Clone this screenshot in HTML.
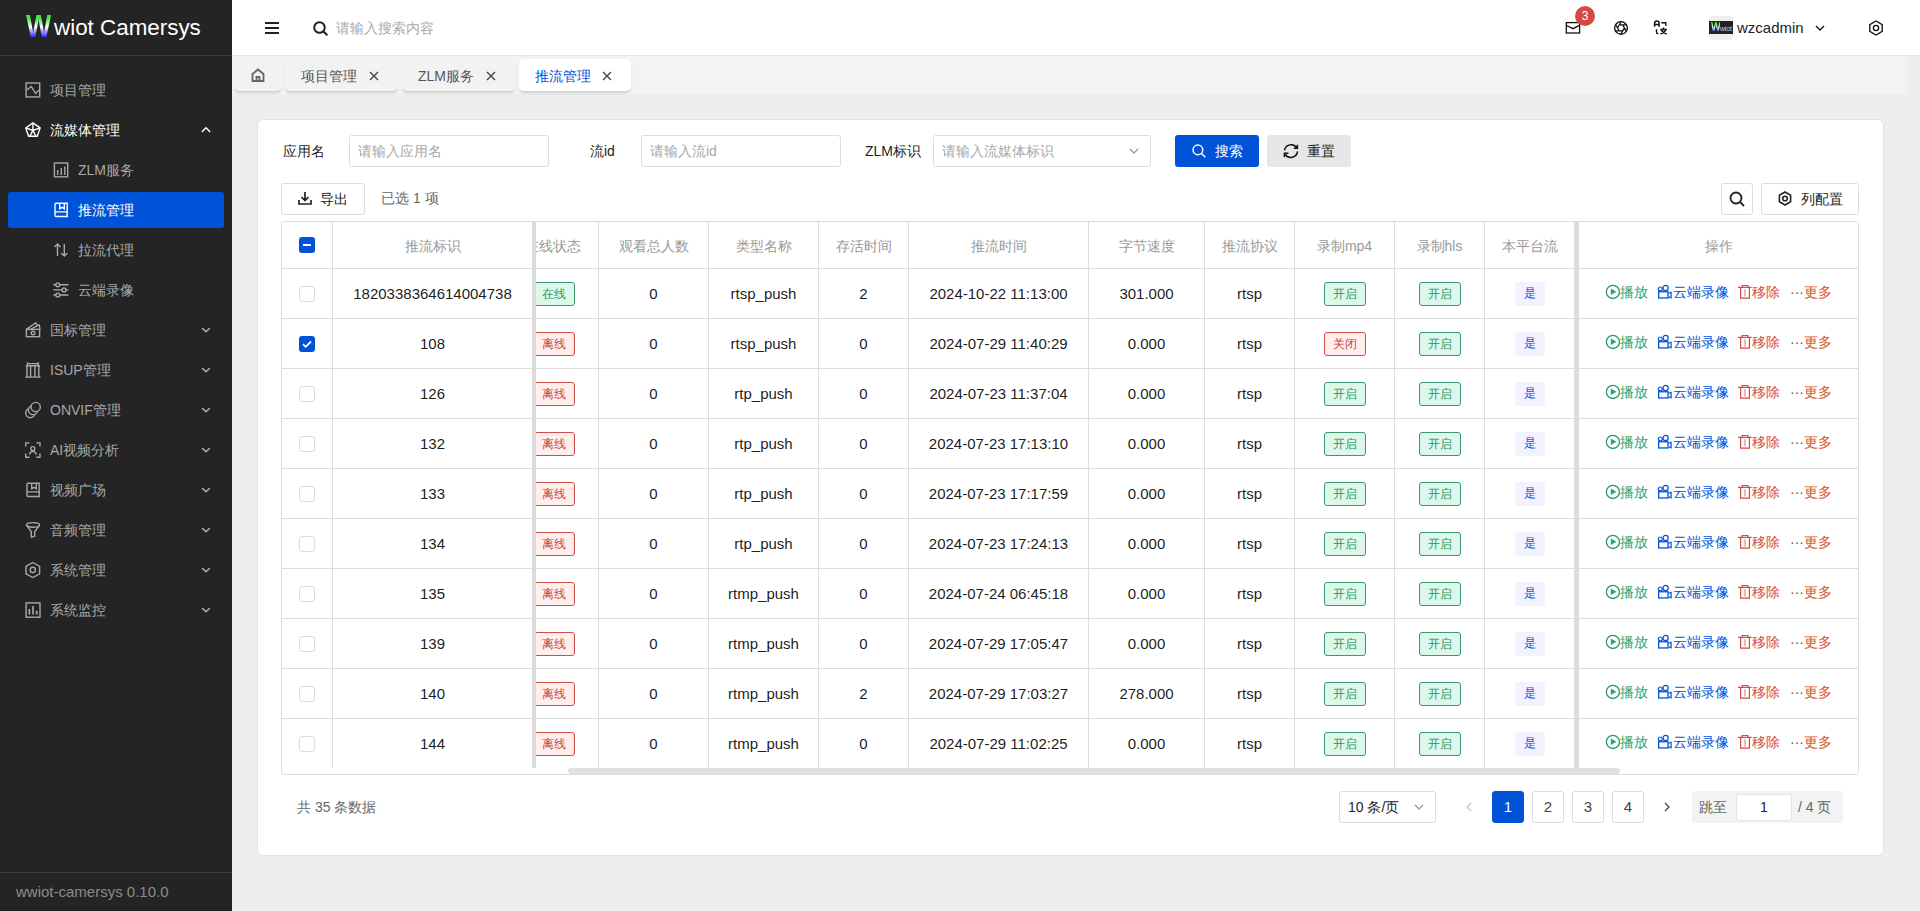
<!DOCTYPE html><html><head><meta charset="utf-8"><style>*{box-sizing:border-box;margin:0;padding:0}
html,body{width:1920px;height:911px;overflow:hidden}
body{background:#eeeeee;font-family:"Liberation Sans",sans-serif;font-size:14px;color:rgba(0,0,0,.9);position:relative}
.abs{position:absolute}
svg{display:block}
/* sidebar */
#side{position:absolute;left:0;top:0;width:232px;height:911px;background:#242424}
#logo{position:absolute;left:0;top:0;width:232px;height:56px;border-bottom:1px solid #3a3a3a}
.mi{position:absolute;left:0;width:232px;height:40px;color:#a8a8a8;font-size:14px;line-height:40px}
.mi .ic{position:absolute;top:12px;width:16px;height:16px}
.mi .tx{position:absolute;left:50px;top:0}
.mi.l2 .tx{left:78px}
.mi .ch{position:absolute;left:199px;top:14px;width:12px;height:12px}
#foot{position:absolute;left:0;top:872px;width:232px;height:39px;border-top:1px solid #3d3d3d;color:#8c8c8c;font-size:15px;line-height:38px;padding-left:16px}
/* header */
#hdr{position:absolute;left:232px;top:0;width:1688px;height:56px;background:#fff;border-bottom:1px solid #e7e7e7}
#tabbar{position:absolute;left:232px;top:56px;width:1676px;height:38px;background:#f3f3f3}
.tab{position:absolute;top:3px;height:32px;background:#f2f2f2;border-radius:5px;box-shadow:0 3px 3px -1px rgba(0,0,0,.16);color:#555;line-height:32px}
.tab.act{background:#fff;color:#0052d9}
/* card */
#card{position:absolute;left:257px;top:119px;width:1627px;height:737px;background:#fff;border:1px solid #e2e2e2;border-radius:6px}
.lbl{position:absolute;line-height:20px;color:rgba(0,0,0,.9)}
.inp{position:absolute;height:32px;border:1px solid #dcdcdc;border-radius:3px;color:#a8a8a8;line-height:30px;padding-left:8px;background:#fff}
.btn{position:absolute;height:32px;border-radius:3px;line-height:32px}
/* table */
#tbl{position:absolute;left:281px;top:221px;width:1578px;height:554px;border:1px solid #e3e3e3;border-radius:3px;overflow:hidden}
.th{position:absolute;top:0;height:47px;line-height:46px;text-align:center;color:#999;border-right:1px solid #e3e3e3;border-bottom:1px solid #e3e3e3}
.td{position:absolute;height:50px;line-height:49px;text-align:center;border-right:1px solid #e3e3e3;border-bottom:1px solid #e3e3e3;color:rgba(0,0,0,.9)}
.tag{display:inline-block;height:24px;line-height:22px;border:1px solid;border-radius:3px;font-size:12px;padding:0 7px;vertical-align:middle}
.tg{color:#2ba471;border-color:#2ba471;background:#e3f9e9}
.tr{color:#d54941;border-color:#d54941;background:#fff0ed}
.tb{color:#0052d9;border-color:#f2f3ff;background:#f2f3ff;padding:0 9px}
.cb{position:absolute;left:17px;top:17px;width:16px;height:16px;border:1px solid #dcdcdc;border-radius:3px;background:#fff}
.cb.on{background:#0052d9;border-color:#0052d9}
.ops{font-size:14px;white-space:nowrap}
.pg{position:absolute;top:791px;height:32px;width:32px;border:1px solid #dcdcdc;border-radius:3px;text-align:center;line-height:30px;background:#fff;color:#444;font-size:15px}
</style></head><body>
<div id="side">
<div id="logo">
<div class="abs" style="left:26px;top:11px;width:30px;height:32px;font:bold 31px/32px 'Liberation Sans',sans-serif;background:linear-gradient(#3ee83e 22%,#ffffff 50%,#0000ff 88%);-webkit-background-clip:text;color:transparent;transform:scaleX(0.86);transform-origin:0 0">W</div>
<div class="abs" style="left:54px;top:13px;font:22.4px/30px 'Liberation Sans',sans-serif;color:#fff;white-space:nowrap">wiot Camersys</div>
</div>
<div class="mi" style="top:69px;color:#a8a8a8"><div class="ic" style="left:25px;top:12px"><svg width="16" height="16" viewBox="0 0 16 16" fill="none" stroke="#a8a8a8" stroke-width="1.4" style="overflow:visible"><rect x="1.1" y="2" width="13.6" height="13.9"/><path d="M1.8 9L6.3 5.5L10.5 12.4L14.5 8.7"/></svg></div><div class="tx" style="top:1px">项目管理</div></div>
<div class="mi" style="top:109px;color:#ffffff"><div class="ic" style="left:25px;top:12px"><svg width="16" height="16" viewBox="0 0 16 16" fill="none" stroke="#ffffff" stroke-width="1.4" style="overflow:visible"><path d="M7.9 1.9L15.1 6.9L12.3 15.3H3.6L0.8 6.9Z"/><path d="M7.9 1.9V9.4M0.8 6.9L7.9 9.4L15.1 6.9M7.9 9.4L4.9 15.3M7.9 9.4L10.9 15.3"/></svg></div><div class="tx" style="top:1px">流媒体管理</div><div class="ch" style="left:199px;top:14px"><svg width="12" height="12" viewBox="0 0 12 12" fill="none" stroke="#ffffff" stroke-width="1.5" style="overflow:visible"><path d="M2.9 8.9L7 4.7L11.1 8.9"/></svg></div></div>
<div class="mi l2" style="top:149px;color:#a8a8a8"><div class="ic" style="left:53px;top:12px"><svg width="16" height="16" viewBox="0 0 16 16" fill="none" stroke="#a8a8a8" stroke-width="1.4" style="overflow:visible"><rect x="1.4" y="2" width="13.3" height="13.8"/><path d="M4.7 14V9M8.3 14V7M11.8 14V5.5"/></svg></div><div class="tx" style="top:1px">ZLM服务</div></div>
<div class="abs" style="left:8px;top:192px;width:216px;height:36px;background:#0052d9;border-radius:3px"></div>
<div class="mi l2" style="top:189px;color:#ffffff"><div class="ic" style="left:53px;top:12px"><svg width="16" height="16" viewBox="0 0 16 16" fill="none" stroke="#ffffff" stroke-width="1.4" style="overflow:visible"><path d="M3.2 2.3H14.2V15.5H3.2A1.2 1.2 0 0 1 2 14.3V3.5A1.2 1.2 0 0 1 3.2 2.3ZM2 10.9H14.2M6.7 2.3V7.8L9 6.3L11.3 7.8V2.3"/></svg></div><div class="tx" style="top:1px">推流管理</div></div>
<div class="mi l2" style="top:229px;color:#a8a8a8"><div class="ic" style="left:53px;top:12px"><svg width="16" height="16" viewBox="0 0 16 16" fill="none" stroke="#a8a8a8" stroke-width="1.4" style="overflow:visible"><path d="M4.5 15V3M1.5 6L4.5 3L7.5 6M11.3 3V15M8.2 12L11.3 15L14.4 12"/></svg></div><div class="tx" style="top:1px">拉流代理</div></div>
<div class="mi l2" style="top:269px;color:#a8a8a8"><div class="ic" style="left:53px;top:12px"><svg width="16" height="16" viewBox="0 0 16 16" fill="none" stroke="#a8a8a8" stroke-width="1.4" style="overflow:visible"><path d="M0.4 3.8H15.4M0.4 8.9H15.4M0.4 14H15.4"/><circle cx="4.8" cy="3.8" r="1.9" fill="#242424"/><circle cx="11" cy="8.9" r="1.9" fill="#242424"/><circle cx="4.8" cy="14" r="1.9" fill="#242424"/></svg></div><div class="tx" style="top:1px">云端录像</div></div>
<div class="mi" style="top:309px;color:#a8a8a8"><div class="ic" style="left:25px;top:12px"><svg width="16" height="16" viewBox="0 0 16 16" fill="none" stroke="#a8a8a8" stroke-width="1.4" style="overflow:visible"><rect x="1.4" y="8.4" width="13.2" height="7.3"/><circle cx="8" cy="12" r="1.8"/><path d="M1.4 8.4L10.8 1.7L12.4 4.6M5.6 8.4L12.4 4.6L14.2 3.9L15 8.4"/></svg></div><div class="tx" style="top:1px">国标管理</div><div class="ch" style="left:199px;top:14px"><svg width="12" height="12" viewBox="0 0 12 12" fill="none" stroke="#a8a8a8" stroke-width="1.5" style="overflow:visible"><path d="M3.2 5.1L7 8.8L10.8 5.1"/></svg></div></div>
<div class="mi" style="top:349px;color:#a8a8a8"><div class="ic" style="left:25px;top:12px"><svg width="16" height="16" viewBox="0 0 16 16" fill="none" stroke="#a8a8a8" stroke-width="1.4" style="overflow:visible"><path d="M0.7 4.8H15M2.5 1.3V4.8M13.2 1.3V4.8M2.5 2.6H13.2M2 4.8V15.6M5.6 4.8V15.6M9.9 4.8V15.6M13.8 4.8V15.6M0.3 16.1H15.6"/></svg></div><div class="tx" style="top:1px">ISUP管理</div><div class="ch" style="left:199px;top:14px"><svg width="12" height="12" viewBox="0 0 12 12" fill="none" stroke="#a8a8a8" stroke-width="1.5" style="overflow:visible"><path d="M3.2 5.1L7 8.8L10.8 5.1"/></svg></div></div>
<div class="mi" style="top:389px;color:#a8a8a8"><div class="ic" style="left:25px;top:12px"><svg width="16" height="16" viewBox="0 0 16 16" fill="none" stroke="#a8a8a8" stroke-width="1.4" style="overflow:visible"><circle cx="5.3" cy="12.1" r="4.6" fill="#242424"/><circle cx="8" cy="9.05" r="4.6" fill="#242424"/><circle cx="10.7" cy="6" r="4.6" fill="#242424"/></svg></div><div class="tx" style="top:1px">ONVIF管理</div><div class="ch" style="left:199px;top:14px"><svg width="12" height="12" viewBox="0 0 12 12" fill="none" stroke="#a8a8a8" stroke-width="1.5" style="overflow:visible"><path d="M3.2 5.1L7 8.8L10.8 5.1"/></svg></div></div>
<div class="mi" style="top:429px;color:#a8a8a8"><div class="ic" style="left:25px;top:12px"><svg width="16" height="16" viewBox="0 0 16 16" fill="none" stroke="#a8a8a8" stroke-width="1.4" style="overflow:visible"><path d="M0.7 5.5V1.9H4.5M11.2 1.9H15V5.5M15 12.5V16.2H11.2M4.5 16.2H0.7V12.5"/><circle cx="7.85" cy="7.6" r="2"/><path d="M4.5 13.6C5 11.1 6.3 10.4 7.85 10.4C9.4 10.4 10.7 11.1 11.2 13.6"/></svg></div><div class="tx" style="top:1px">AI视频分析</div><div class="ch" style="left:199px;top:14px"><svg width="12" height="12" viewBox="0 0 12 12" fill="none" stroke="#a8a8a8" stroke-width="1.5" style="overflow:visible"><path d="M3.2 5.1L7 8.8L10.8 5.1"/></svg></div></div>
<div class="mi" style="top:469px;color:#a8a8a8"><div class="ic" style="left:25px;top:12px"><svg width="16" height="16" viewBox="0 0 16 16" fill="none" stroke="#a8a8a8" stroke-width="1.4" style="overflow:visible"><path d="M3.2 2.3H14.2V15.5H3.2A1.2 1.2 0 0 1 2 14.3V3.5A1.2 1.2 0 0 1 3.2 2.3ZM2 10.9H14.2M6.7 2.3V7.8L9 6.3L11.3 7.8V2.3"/></svg></div><div class="tx" style="top:1px">视频广场</div><div class="ch" style="left:199px;top:14px"><svg width="12" height="12" viewBox="0 0 12 12" fill="none" stroke="#a8a8a8" stroke-width="1.5" style="overflow:visible"><path d="M3.2 5.1L7 8.8L10.8 5.1"/></svg></div></div>
<div class="mi" style="top:509px;color:#a8a8a8"><div class="ic" style="left:25px;top:12px"><svg width="16" height="16" viewBox="0 0 16 16" fill="none" stroke="#a8a8a8" stroke-width="1.4" style="overflow:visible"><ellipse cx="8" cy="3.9" rx="6.6" ry="2.3"/><path d="M1.4 4.1L6.3 10.5V16.2L9.7 15.3V10.5L14.6 4.1"/></svg></div><div class="tx" style="top:1px">音频管理</div><div class="ch" style="left:199px;top:14px"><svg width="12" height="12" viewBox="0 0 12 12" fill="none" stroke="#a8a8a8" stroke-width="1.5" style="overflow:visible"><path d="M3.2 5.1L7 8.8L10.8 5.1"/></svg></div></div>
<div class="mi" style="top:549px;color:#a8a8a8"><div class="ic" style="left:25px;top:12px"><svg width="16" height="16" viewBox="0 0 16 16" fill="none" stroke="#a8a8a8" stroke-width="1.4" style="overflow:visible"><path d="M7.8 1.5L14.6 5.3V12.8L7.8 16.5L1 12.8V5.3Z"/><circle cx="7.8" cy="8.9" r="2.6"/></svg></div><div class="tx" style="top:1px">系统管理</div><div class="ch" style="left:199px;top:14px"><svg width="12" height="12" viewBox="0 0 12 12" fill="none" stroke="#a8a8a8" stroke-width="1.5" style="overflow:visible"><path d="M3.2 5.1L7 8.8L10.8 5.1"/></svg></div></div>
<div class="mi" style="top:589px;color:#a8a8a8"><div class="ic" style="left:25px;top:12px"><svg width="16" height="16" viewBox="0 0 16 16" fill="none" stroke="#a8a8a8" stroke-width="1.4" style="overflow:visible"><rect x="1.1" y="1.9" width="13.9" height="14.3"/><path d="M4.35 13.5V8M8.05 13.5V5M11.7 13.5V9.7" stroke-width="1.7"/></svg></div><div class="tx" style="top:1px">系统监控</div><div class="ch" style="left:199px;top:14px"><svg width="12" height="12" viewBox="0 0 12 12" fill="none" stroke="#a8a8a8" stroke-width="1.5" style="overflow:visible"><path d="M3.2 5.1L7 8.8L10.8 5.1"/></svg></div></div>
<div id="foot">wwiot-camersys 0.10.0</div>
</div>
<div id="hdr">
<div class="abs" style="left:33px;top:22px"><svg width="14" height="12" viewBox="0 0 14 12" fill="none" ><path d="M0 1h14M0 6h14M0 11h14" stroke="#222" stroke-width="2"/></svg></div>
<div class="abs" style="left:81px;top:21px"><svg width="15" height="15" viewBox="0 0 15 15" fill="none" ><circle cx="6.5" cy="6.5" r="5.3" stroke="#222" stroke-width="2"/><path d="M10.5 10.5l3.8 3.8" stroke="#222" stroke-width="2"/></svg></div>
<div class="abs" style="left:104px;top:18px;line-height:20px;color:#aaaaaa">请输入搜索内容</div>
<div class="abs" style="left:1329px;top:16px"><svg width="24" height="24" viewBox="0 0 24 24" fill="none" ><rect x="5.3" y="6.6" width="13.3" height="10.4" stroke="#111" stroke-width="1.3"/><path d="M5.5 9.5L12 12.7L18.4 9.4" stroke="#111" stroke-width="1.3"/></svg></div>
<div class="abs" style="left:1343px;top:6px;width:20px;height:20px;border-radius:10px;background:#d54941;color:#fff;font-size:12px;line-height:20px;text-align:center">3</div>
<div class="abs" style="left:1377px;top:16px"><svg width="24" height="24" viewBox="0 0 24 24" fill="none" ><circle cx="12" cy="11.9" r="6.35" stroke="#111" stroke-width="1.35"/><path d="M10.20 8.90L17.60 8.90M13.70 8.84L17.40 15.25M15.50 11.84L11.80 18.25M13.80 14.90L6.40 14.90M10.30 14.96L6.60 8.55M8.50 11.96L12.20 5.55" stroke="#111" stroke-width="1.3"/></svg></div>
<div class="abs" style="left:1417px;top:16px"><svg width="24" height="24" viewBox="0 0 24 24" fill="none" ><path d="M5.6 10.8V7.3a2.25 2.25 0 0 1 4.5 0V10.8M5.6 8.4H10.1" stroke="#111" stroke-width="1.5"/><path d="M12.3 6.8H16.8V9.7" stroke="#111" stroke-width="1.4"/><path d="M7.5 13.2V16.3Q7.5 17.8 9.3 17.8" stroke="#111" stroke-width="1.4"/><path d="M14.5 11.5V13M11.3 13.5H17.9M12.3 14.2Q14 17.3 17.8 17.8M16.6 14.2Q15 17.3 11.3 17.8" stroke="#111" stroke-width="1.4"/></svg></div>
<div class="abs" style="left:1477px;top:16px;width:24px;height:24px;border-radius:4px;background:#efefef"></div>
<div class="abs" style="left:1477px;top:21px;width:24px;height:13px;background:#222"></div>
<div class="abs" style="left:1479px;top:21px;font:bold 12px/13px 'Liberation Sans',sans-serif;background:linear-gradient(#3ee83e 15%,#fff 50%,#3030ff 85%);-webkit-background-clip:text;color:transparent;transform:scaleX(0.85);transform-origin:0 0">W</div>
<div class="abs" style="left:1488px;top:24px;font:7px/9px 'Liberation Sans',sans-serif;color:#cfcfcf;letter-spacing:-0.2px">wiot</div>
<div class="abs" style="left:1505px;top:17px;font-size:15px;line-height:22px;color:#222">wzcadmin</div>
<div class="abs" style="left:1583px;top:25px"><svg width="10" height="6" viewBox="0 0 10 6" fill="none" ><path d="M1 1l4 4 4-4" stroke="#222" stroke-width="1.5"/></svg></div>
<div class="abs" style="left:1637px;top:20px"><svg width="14" height="16" viewBox="0 0 14 16" fill="none" ><path d="M7 1l6.2 3.6v6.8L7 15 .8 11.4V4.6z" stroke="#111" stroke-width="1.35"/><circle cx="7" cy="8" r="2.6" stroke="#111" stroke-width="1.35"/></svg></div>
</div>
<div id="tabbar">
<div class="tab" style="left:2px;width:48px">
<div class="abs" style="left:17px;top:9px"><svg width="14" height="14" viewBox="0 0 14 14" fill="none" ><path d="M1.5 13V6L7 1.5 12.5 6v7zM5.5 13V9h3v4" stroke="#666" stroke-width="1.8"/></svg></div>
</div>
<div class="tab" style="left:53px;width:113px">
<div class="abs" style="left:16px;top:1px;line-height:32px">项目管理</div>
<div class="abs" style="left:84px;top:12px"><svg width="10" height="10" viewBox="0 0 10 10" fill="none" ><path d="M1 1l8 8M9 1L1 9" stroke="#444" stroke-width="1.4"/></svg></div>
</div>
<div class="tab" style="left:170px;width:113px">
<div class="abs" style="left:16px;top:1px;line-height:32px">ZLM服务</div>
<div class="abs" style="left:84px;top:12px"><svg width="10" height="10" viewBox="0 0 10 10" fill="none" ><path d="M1 1l8 8M9 1L1 9" stroke="#444" stroke-width="1.4"/></svg></div>
</div>
<div class="tab act" style="left:287px;width:112px">
<div class="abs" style="left:16px;top:1px;line-height:32px">推流管理</div>
<div class="abs" style="left:83px;top:12px"><svg width="10" height="10" viewBox="0 0 10 10" fill="none" ><path d="M1 1l8 8M9 1L1 9" stroke="#444" stroke-width="1.4"/></svg></div>
</div>
</div>
<div id="card"></div>
<div class="lbl" style="left:283px;top:141px">应用名</div>
<div class="inp" style="left:349px;top:135px;width:200px">请输入应用名</div>
<div class="lbl" style="left:590px;top:141px">流id</div>
<div class="inp" style="left:641px;top:135px;width:200px">请输入流id</div>
<div class="lbl" style="left:865px;top:141px">ZLM标识</div>
<div class="inp" style="left:933px;top:135px;width:218px">请输入流媒体标识</div>
<div class="abs" style="left:1129px;top:148px"><svg width="10" height="6" viewBox="0 0 10 6" fill="none" ><path d="M1 1l4 4 4-4" stroke="#999" stroke-width="1.3"/></svg></div>
<div class="btn" style="left:1175px;top:135px;width:84px;background:#0052d9;color:#fff"></div>
<div class="abs" style="left:1187px;top:139px"><svg width="24" height="24" viewBox="0 0 24 24" fill="none" ><circle cx="10.9" cy="10.9" r="4.85" stroke="#fff" stroke-width="1.5"/><path d="M14.5 14.5L18.3 18.3" stroke="#fff" stroke-width="1.5"/></svg></div>
<div class="abs" style="left:1215px;top:141px;line-height:20px;color:#fff">搜索</div>
<div class="btn" style="left:1267px;top:135px;width:84px;background:#e7e7e7"></div>
<div class="abs" style="left:1279px;top:139px"><svg width="24" height="24" viewBox="0 0 24 24" fill="none" ><path d="M5.5 11.3A6.7 6.7 0 0 1 17.6 8.6M18.4 5.8V9.3H14.8M18.5 12.4A6.7 6.7 0 0 1 6.3 15.5M5.4 17.9V14.3H9.4" stroke="#111" stroke-width="1.5"/></svg></div>
<div class="abs" style="left:1307px;top:141px;line-height:20px;color:#222">重置</div>
<div class="btn" style="left:281px;top:183px;width:84px;border:1px solid #dcdcdc;background:#fff"></div>
<div class="abs" style="left:298px;top:191px"><svg width="14" height="14" viewBox="0 0 14 14" fill="none" ><path d="M7 1v8M3.5 6L7 9.5 10.5 6M1 9v4h12V9" stroke="#222" stroke-width="1.7"/></svg></div>
<div class="abs" style="left:320px;top:189px;line-height:20px;color:#222">导出</div>
<div class="abs" style="left:381px;top:188px;line-height:20px;color:#666">已选 1 项</div>
<div class="btn" style="left:1721px;top:183px;width:32px;border:1px solid #dcdcdc;background:#fff"></div>
<div class="abs" style="left:1729px;top:191px"><svg width="16" height="16" viewBox="0 0 16 16" fill="none" ><circle cx="7" cy="7" r="5.5" stroke="#222" stroke-width="1.8"/><path d="M11 11l4 4" stroke="#222" stroke-width="1.8"/></svg></div>
<div class="btn" style="left:1761px;top:183px;width:98px;border:1px solid #dcdcdc;background:#fff"></div>
<div class="abs" style="left:1778px;top:191px"><svg width="14" height="15" viewBox="0 0 14 15" fill="none" ><path d="M7 1l5.6 3.2v6.6L7 14l-5.6-3.2V4.2z" stroke="#222" stroke-width="1.6"/><circle cx="7" cy="7.5" r="2.3" stroke="#222" stroke-width="1.6"/></svg></div>
<div class="abs" style="left:1801px;top:189px;line-height:20px;color:#222">列配置</div>
<div class="abs" style="left:281px;top:221px;width:1578px;height:554px;border:1px solid #dddddd;border-radius:3px;background:#fff"></div>
<div class="abs" style="left:282px;top:268px;width:1576px;height:1px;background:#dddddd"></div>
<div class="abs" style="left:282px;top:318px;width:1576px;height:1px;background:#dddddd"></div>
<div class="abs" style="left:282px;top:368px;width:1576px;height:1px;background:#dddddd"></div>
<div class="abs" style="left:282px;top:418px;width:1576px;height:1px;background:#dddddd"></div>
<div class="abs" style="left:282px;top:468px;width:1576px;height:1px;background:#dddddd"></div>
<div class="abs" style="left:282px;top:518px;width:1576px;height:1px;background:#dddddd"></div>
<div class="abs" style="left:282px;top:568px;width:1576px;height:1px;background:#dddddd"></div>
<div class="abs" style="left:282px;top:618px;width:1576px;height:1px;background:#dddddd"></div>
<div class="abs" style="left:282px;top:668px;width:1576px;height:1px;background:#dddddd"></div>
<div class="abs" style="left:282px;top:718px;width:1576px;height:1px;background:#dddddd"></div>
<div class="abs" style="left:332px;top:222px;width:1px;height:546px;background:#dddddd"></div>
<div class="abs" style="left:598px;top:222px;width:1px;height:546px;background:#dddddd"></div>
<div class="abs" style="left:708px;top:222px;width:1px;height:546px;background:#dddddd"></div>
<div class="abs" style="left:818px;top:222px;width:1px;height:546px;background:#dddddd"></div>
<div class="abs" style="left:908px;top:222px;width:1px;height:546px;background:#dddddd"></div>
<div class="abs" style="left:1088px;top:222px;width:1px;height:546px;background:#dddddd"></div>
<div class="abs" style="left:1204px;top:222px;width:1px;height:546px;background:#dddddd"></div>
<div class="abs" style="left:1294px;top:222px;width:1px;height:546px;background:#dddddd"></div>
<div class="abs" style="left:1394px;top:222px;width:1px;height:546px;background:#dddddd"></div>
<div class="abs" style="left:1484px;top:222px;width:1px;height:546px;background:#dddddd"></div>
<div class="abs" style="left:1574px;top:222px;width:1px;height:546px;background:#dddddd"></div>
<div class="abs" style="left:532px;top:222px;width:4px;height:546px;background:#dcdcdc"></div>
<div class="abs" style="left:1574px;top:222px;width:5px;height:546px;background:#dcdcdc"></div>
<div class="abs" style="left:333px;top:224px;width:199px;height:45px;display:flex;align-items:center;justify-content:center;white-space:nowrap;color:#999">推流标识</div>
<div class="abs" style="left:536px;top:222px;width:62px;height:46px;overflow:hidden"><div class="abs" style="left:-536px;top:-222px;width:1920px;height:911px"><div class="abs" style="left:508px;top:224px;width:90px;height:45px;display:flex;align-items:center;justify-content:center;white-space:nowrap;color:#999">在线状态</div></div></div>
<div class="abs" style="left:599px;top:224px;width:109px;height:45px;display:flex;align-items:center;justify-content:center;white-space:nowrap;color:#999">观看总人数</div>
<div class="abs" style="left:709px;top:224px;width:109px;height:45px;display:flex;align-items:center;justify-content:center;white-space:nowrap;color:#999">类型名称</div>
<div class="abs" style="left:819px;top:224px;width:89px;height:45px;display:flex;align-items:center;justify-content:center;white-space:nowrap;color:#999">存活时间</div>
<div class="abs" style="left:909px;top:224px;width:179px;height:45px;display:flex;align-items:center;justify-content:center;white-space:nowrap;color:#999">推流时间</div>
<div class="abs" style="left:1089px;top:224px;width:115px;height:45px;display:flex;align-items:center;justify-content:center;white-space:nowrap;color:#999">字节速度</div>
<div class="abs" style="left:1205px;top:224px;width:89px;height:45px;display:flex;align-items:center;justify-content:center;white-space:nowrap;color:#999">推流协议</div>
<div class="abs" style="left:1295px;top:224px;width:99px;height:45px;display:flex;align-items:center;justify-content:center;white-space:nowrap;color:#999">录制mp4</div>
<div class="abs" style="left:1395px;top:224px;width:89px;height:45px;display:flex;align-items:center;justify-content:center;white-space:nowrap;color:#999">录制hls</div>
<div class="abs" style="left:1485px;top:224px;width:89px;height:45px;display:flex;align-items:center;justify-content:center;white-space:nowrap;color:#999">本平台流</div>
<div class="abs" style="left:1579px;top:224px;width:279px;height:45px;display:flex;align-items:center;justify-content:center;white-space:nowrap;color:#999">操作</div>
<div class="abs" style="left:299px;top:237px;width:16px;height:16px;border-radius:3px;background:#0052d9"><div class="abs" style="left:4px;top:7px;width:8px;height:2px;background:#fff"></div></div>
<div class="abs" style="left:299px;top:286px;width:16px;height:16px;border-radius:3px;border:1px solid #dcdcdc;background:#fff"></div>
<div class="abs" style="left:333px;top:269px;width:199px;height:49px;display:flex;align-items:center;justify-content:center;white-space:nowrap;font-size:15px">1820338364614004738</div>
<div class="abs" style="left:536px;top:269px;width:62px;height:49px;overflow:hidden"><div class="abs" style="left:-536px;top:-269px;width:1920px;height:911px"><div class="abs" style="left:509px;top:269px;width:90px;height:49px;display:flex;align-items:center;justify-content:center;white-space:nowrap;"><div style="width:42px;height:24px;border-radius:3px;font-size:12px;line-height:22px;text-align:center;color:#2a9466;border:1px solid #3a9a6e;background:#ddf8ea">在线</div></div></div></div>
<div class="abs" style="left:599px;top:269px;width:109px;height:49px;display:flex;align-items:center;justify-content:center;white-space:nowrap;font-size:15px">0</div>
<div class="abs" style="left:709px;top:269px;width:109px;height:49px;display:flex;align-items:center;justify-content:center;white-space:nowrap;font-size:15px">rtsp_push</div>
<div class="abs" style="left:819px;top:269px;width:89px;height:49px;display:flex;align-items:center;justify-content:center;white-space:nowrap;font-size:15px">2</div>
<div class="abs" style="left:909px;top:269px;width:179px;height:49px;display:flex;align-items:center;justify-content:center;white-space:nowrap;font-size:15px">2024-10-22 11:13:00</div>
<div class="abs" style="left:1089px;top:269px;width:115px;height:49px;display:flex;align-items:center;justify-content:center;white-space:nowrap;font-size:15px">301.000</div>
<div class="abs" style="left:1205px;top:269px;width:89px;height:49px;display:flex;align-items:center;justify-content:center;white-space:nowrap;font-size:15px">rtsp</div>
<div class="abs" style="left:1295px;top:269px;width:99px;height:49px;display:flex;align-items:center;justify-content:center;white-space:nowrap;"><div style="width:42px;height:24px;border-radius:3px;font-size:12px;line-height:22px;text-align:center;color:#2a9466;border:1px solid #3a9a6e;background:#ddf8ea">开启</div></div>
<div class="abs" style="left:1395px;top:269px;width:89px;height:49px;display:flex;align-items:center;justify-content:center;white-space:nowrap;"><div style="width:42px;height:24px;border-radius:3px;font-size:12px;line-height:22px;text-align:center;color:#2a9466;border:1px solid #3a9a6e;background:#ddf8ea">开启</div></div>
<div class="abs" style="left:1485px;top:269px;width:89px;height:49px;display:flex;align-items:center;justify-content:center;white-space:nowrap;"><div style="width:30px;height:24px;border-radius:3px;font-size:12px;line-height:22px;text-align:center;color:#0052d9;background:#f2f3ff">是</div></div>
<div class="abs" style="left:1605px;top:283px"><svg width="16" height="16" viewBox="0 0 16 16" fill="none" ><circle cx="7.9" cy="8.9" r="6.55" stroke="#2b9a6a" stroke-width="1.3"/><path d="M5.8 5.6V12.1L11.5 8.85Z" fill="#2ba471"/></svg></div><div class="abs" style="left:1620px;top:282px;line-height:20px;color:#2ba471">播放</div><div class="abs" style="left:1656px;top:283px"><svg width="16" height="16" viewBox="0 0 16 16" fill="none" ><rect x="2.65" y="8.75" width="9.4" height="6.2" stroke="#0052d9" stroke-width="1.3"/><path d="M12.7 10.2L15.1 9.3V14.8L12.7 13.8" stroke="#0052d9" stroke-width="1.2"/><circle cx="4.3" cy="5.9" r="1.9" stroke="#0052d9" stroke-width="1.2"/><circle cx="9.6" cy="5" r="2.6" stroke="#0052d9" stroke-width="1.2"/></svg></div><div class="abs" style="left:1673px;top:282px;line-height:20px;color:#0052d9">云端录像</div><div class="abs" style="left:1736px;top:283px"><svg width="16" height="16" viewBox="0 0 16 16" fill="none" ><path d="M2 4.4H15.6M6.1 4.4V2.5H11.9V4.4M4.6 4.4V15.2H13.4V4.4" stroke="#d54941" stroke-width="1.2"/><path d="M9 6.3V13.6" stroke="#e08a84" stroke-width="1.2"/></svg></div><div class="abs" style="left:1752px;top:282px;line-height:20px;color:#d54941">移除</div><div class="abs" style="left:1790px;top:282px;line-height:20px;color:#d9531e"><span style="color:#9a4a2a">···</span>更多</div>
<div class="abs" style="left:299px;top:336px;width:16px;height:16px;border-radius:3px;background:#0052d9"><svg width="16" height="16" viewBox="0 0 16 16" fill="none" ><path d="M4 8.2l2.7 2.6L12 5.5" stroke="#fff" stroke-width="1.8"/></svg></div>
<div class="abs" style="left:333px;top:319px;width:199px;height:49px;display:flex;align-items:center;justify-content:center;white-space:nowrap;font-size:15px">108</div>
<div class="abs" style="left:536px;top:319px;width:62px;height:49px;overflow:hidden"><div class="abs" style="left:-536px;top:-319px;width:1920px;height:911px"><div class="abs" style="left:509px;top:319px;width:90px;height:49px;display:flex;align-items:center;justify-content:center;white-space:nowrap;"><div style="width:42px;height:24px;border-radius:3px;font-size:12px;line-height:22px;text-align:center;color:#c8433b;border:1px solid #cc5049;background:#ffeeeb">离线</div></div></div></div>
<div class="abs" style="left:599px;top:319px;width:109px;height:49px;display:flex;align-items:center;justify-content:center;white-space:nowrap;font-size:15px">0</div>
<div class="abs" style="left:709px;top:319px;width:109px;height:49px;display:flex;align-items:center;justify-content:center;white-space:nowrap;font-size:15px">rtsp_push</div>
<div class="abs" style="left:819px;top:319px;width:89px;height:49px;display:flex;align-items:center;justify-content:center;white-space:nowrap;font-size:15px">0</div>
<div class="abs" style="left:909px;top:319px;width:179px;height:49px;display:flex;align-items:center;justify-content:center;white-space:nowrap;font-size:15px">2024-07-29 11:40:29</div>
<div class="abs" style="left:1089px;top:319px;width:115px;height:49px;display:flex;align-items:center;justify-content:center;white-space:nowrap;font-size:15px">0.000</div>
<div class="abs" style="left:1205px;top:319px;width:89px;height:49px;display:flex;align-items:center;justify-content:center;white-space:nowrap;font-size:15px">rtsp</div>
<div class="abs" style="left:1295px;top:319px;width:99px;height:49px;display:flex;align-items:center;justify-content:center;white-space:nowrap;"><div style="width:42px;height:24px;border-radius:3px;font-size:12px;line-height:22px;text-align:center;color:#c8433b;border:1px solid #cc5049;background:#ffeeeb">关闭</div></div>
<div class="abs" style="left:1395px;top:319px;width:89px;height:49px;display:flex;align-items:center;justify-content:center;white-space:nowrap;"><div style="width:42px;height:24px;border-radius:3px;font-size:12px;line-height:22px;text-align:center;color:#2a9466;border:1px solid #3a9a6e;background:#ddf8ea">开启</div></div>
<div class="abs" style="left:1485px;top:319px;width:89px;height:49px;display:flex;align-items:center;justify-content:center;white-space:nowrap;"><div style="width:30px;height:24px;border-radius:3px;font-size:12px;line-height:22px;text-align:center;color:#0052d9;background:#f2f3ff">是</div></div>
<div class="abs" style="left:1605px;top:333px"><svg width="16" height="16" viewBox="0 0 16 16" fill="none" ><circle cx="7.9" cy="8.9" r="6.55" stroke="#2b9a6a" stroke-width="1.3"/><path d="M5.8 5.6V12.1L11.5 8.85Z" fill="#2ba471"/></svg></div><div class="abs" style="left:1620px;top:332px;line-height:20px;color:#2ba471">播放</div><div class="abs" style="left:1656px;top:333px"><svg width="16" height="16" viewBox="0 0 16 16" fill="none" ><rect x="2.65" y="8.75" width="9.4" height="6.2" stroke="#0052d9" stroke-width="1.3"/><path d="M12.7 10.2L15.1 9.3V14.8L12.7 13.8" stroke="#0052d9" stroke-width="1.2"/><circle cx="4.3" cy="5.9" r="1.9" stroke="#0052d9" stroke-width="1.2"/><circle cx="9.6" cy="5" r="2.6" stroke="#0052d9" stroke-width="1.2"/></svg></div><div class="abs" style="left:1673px;top:332px;line-height:20px;color:#0052d9">云端录像</div><div class="abs" style="left:1736px;top:333px"><svg width="16" height="16" viewBox="0 0 16 16" fill="none" ><path d="M2 4.4H15.6M6.1 4.4V2.5H11.9V4.4M4.6 4.4V15.2H13.4V4.4" stroke="#d54941" stroke-width="1.2"/><path d="M9 6.3V13.6" stroke="#e08a84" stroke-width="1.2"/></svg></div><div class="abs" style="left:1752px;top:332px;line-height:20px;color:#d54941">移除</div><div class="abs" style="left:1790px;top:332px;line-height:20px;color:#d9531e"><span style="color:#9a4a2a">···</span>更多</div>
<div class="abs" style="left:299px;top:386px;width:16px;height:16px;border-radius:3px;border:1px solid #dcdcdc;background:#fff"></div>
<div class="abs" style="left:333px;top:369px;width:199px;height:49px;display:flex;align-items:center;justify-content:center;white-space:nowrap;font-size:15px">126</div>
<div class="abs" style="left:536px;top:369px;width:62px;height:49px;overflow:hidden"><div class="abs" style="left:-536px;top:-369px;width:1920px;height:911px"><div class="abs" style="left:509px;top:369px;width:90px;height:49px;display:flex;align-items:center;justify-content:center;white-space:nowrap;"><div style="width:42px;height:24px;border-radius:3px;font-size:12px;line-height:22px;text-align:center;color:#c8433b;border:1px solid #cc5049;background:#ffeeeb">离线</div></div></div></div>
<div class="abs" style="left:599px;top:369px;width:109px;height:49px;display:flex;align-items:center;justify-content:center;white-space:nowrap;font-size:15px">0</div>
<div class="abs" style="left:709px;top:369px;width:109px;height:49px;display:flex;align-items:center;justify-content:center;white-space:nowrap;font-size:15px">rtp_push</div>
<div class="abs" style="left:819px;top:369px;width:89px;height:49px;display:flex;align-items:center;justify-content:center;white-space:nowrap;font-size:15px">0</div>
<div class="abs" style="left:909px;top:369px;width:179px;height:49px;display:flex;align-items:center;justify-content:center;white-space:nowrap;font-size:15px">2024-07-23 11:37:04</div>
<div class="abs" style="left:1089px;top:369px;width:115px;height:49px;display:flex;align-items:center;justify-content:center;white-space:nowrap;font-size:15px">0.000</div>
<div class="abs" style="left:1205px;top:369px;width:89px;height:49px;display:flex;align-items:center;justify-content:center;white-space:nowrap;font-size:15px">rtsp</div>
<div class="abs" style="left:1295px;top:369px;width:99px;height:49px;display:flex;align-items:center;justify-content:center;white-space:nowrap;"><div style="width:42px;height:24px;border-radius:3px;font-size:12px;line-height:22px;text-align:center;color:#2a9466;border:1px solid #3a9a6e;background:#ddf8ea">开启</div></div>
<div class="abs" style="left:1395px;top:369px;width:89px;height:49px;display:flex;align-items:center;justify-content:center;white-space:nowrap;"><div style="width:42px;height:24px;border-radius:3px;font-size:12px;line-height:22px;text-align:center;color:#2a9466;border:1px solid #3a9a6e;background:#ddf8ea">开启</div></div>
<div class="abs" style="left:1485px;top:369px;width:89px;height:49px;display:flex;align-items:center;justify-content:center;white-space:nowrap;"><div style="width:30px;height:24px;border-radius:3px;font-size:12px;line-height:22px;text-align:center;color:#0052d9;background:#f2f3ff">是</div></div>
<div class="abs" style="left:1605px;top:383px"><svg width="16" height="16" viewBox="0 0 16 16" fill="none" ><circle cx="7.9" cy="8.9" r="6.55" stroke="#2b9a6a" stroke-width="1.3"/><path d="M5.8 5.6V12.1L11.5 8.85Z" fill="#2ba471"/></svg></div><div class="abs" style="left:1620px;top:382px;line-height:20px;color:#2ba471">播放</div><div class="abs" style="left:1656px;top:383px"><svg width="16" height="16" viewBox="0 0 16 16" fill="none" ><rect x="2.65" y="8.75" width="9.4" height="6.2" stroke="#0052d9" stroke-width="1.3"/><path d="M12.7 10.2L15.1 9.3V14.8L12.7 13.8" stroke="#0052d9" stroke-width="1.2"/><circle cx="4.3" cy="5.9" r="1.9" stroke="#0052d9" stroke-width="1.2"/><circle cx="9.6" cy="5" r="2.6" stroke="#0052d9" stroke-width="1.2"/></svg></div><div class="abs" style="left:1673px;top:382px;line-height:20px;color:#0052d9">云端录像</div><div class="abs" style="left:1736px;top:383px"><svg width="16" height="16" viewBox="0 0 16 16" fill="none" ><path d="M2 4.4H15.6M6.1 4.4V2.5H11.9V4.4M4.6 4.4V15.2H13.4V4.4" stroke="#d54941" stroke-width="1.2"/><path d="M9 6.3V13.6" stroke="#e08a84" stroke-width="1.2"/></svg></div><div class="abs" style="left:1752px;top:382px;line-height:20px;color:#d54941">移除</div><div class="abs" style="left:1790px;top:382px;line-height:20px;color:#d9531e"><span style="color:#9a4a2a">···</span>更多</div>
<div class="abs" style="left:299px;top:436px;width:16px;height:16px;border-radius:3px;border:1px solid #dcdcdc;background:#fff"></div>
<div class="abs" style="left:333px;top:419px;width:199px;height:49px;display:flex;align-items:center;justify-content:center;white-space:nowrap;font-size:15px">132</div>
<div class="abs" style="left:536px;top:419px;width:62px;height:49px;overflow:hidden"><div class="abs" style="left:-536px;top:-419px;width:1920px;height:911px"><div class="abs" style="left:509px;top:419px;width:90px;height:49px;display:flex;align-items:center;justify-content:center;white-space:nowrap;"><div style="width:42px;height:24px;border-radius:3px;font-size:12px;line-height:22px;text-align:center;color:#c8433b;border:1px solid #cc5049;background:#ffeeeb">离线</div></div></div></div>
<div class="abs" style="left:599px;top:419px;width:109px;height:49px;display:flex;align-items:center;justify-content:center;white-space:nowrap;font-size:15px">0</div>
<div class="abs" style="left:709px;top:419px;width:109px;height:49px;display:flex;align-items:center;justify-content:center;white-space:nowrap;font-size:15px">rtp_push</div>
<div class="abs" style="left:819px;top:419px;width:89px;height:49px;display:flex;align-items:center;justify-content:center;white-space:nowrap;font-size:15px">0</div>
<div class="abs" style="left:909px;top:419px;width:179px;height:49px;display:flex;align-items:center;justify-content:center;white-space:nowrap;font-size:15px">2024-07-23 17:13:10</div>
<div class="abs" style="left:1089px;top:419px;width:115px;height:49px;display:flex;align-items:center;justify-content:center;white-space:nowrap;font-size:15px">0.000</div>
<div class="abs" style="left:1205px;top:419px;width:89px;height:49px;display:flex;align-items:center;justify-content:center;white-space:nowrap;font-size:15px">rtsp</div>
<div class="abs" style="left:1295px;top:419px;width:99px;height:49px;display:flex;align-items:center;justify-content:center;white-space:nowrap;"><div style="width:42px;height:24px;border-radius:3px;font-size:12px;line-height:22px;text-align:center;color:#2a9466;border:1px solid #3a9a6e;background:#ddf8ea">开启</div></div>
<div class="abs" style="left:1395px;top:419px;width:89px;height:49px;display:flex;align-items:center;justify-content:center;white-space:nowrap;"><div style="width:42px;height:24px;border-radius:3px;font-size:12px;line-height:22px;text-align:center;color:#2a9466;border:1px solid #3a9a6e;background:#ddf8ea">开启</div></div>
<div class="abs" style="left:1485px;top:419px;width:89px;height:49px;display:flex;align-items:center;justify-content:center;white-space:nowrap;"><div style="width:30px;height:24px;border-radius:3px;font-size:12px;line-height:22px;text-align:center;color:#0052d9;background:#f2f3ff">是</div></div>
<div class="abs" style="left:1605px;top:433px"><svg width="16" height="16" viewBox="0 0 16 16" fill="none" ><circle cx="7.9" cy="8.9" r="6.55" stroke="#2b9a6a" stroke-width="1.3"/><path d="M5.8 5.6V12.1L11.5 8.85Z" fill="#2ba471"/></svg></div><div class="abs" style="left:1620px;top:432px;line-height:20px;color:#2ba471">播放</div><div class="abs" style="left:1656px;top:433px"><svg width="16" height="16" viewBox="0 0 16 16" fill="none" ><rect x="2.65" y="8.75" width="9.4" height="6.2" stroke="#0052d9" stroke-width="1.3"/><path d="M12.7 10.2L15.1 9.3V14.8L12.7 13.8" stroke="#0052d9" stroke-width="1.2"/><circle cx="4.3" cy="5.9" r="1.9" stroke="#0052d9" stroke-width="1.2"/><circle cx="9.6" cy="5" r="2.6" stroke="#0052d9" stroke-width="1.2"/></svg></div><div class="abs" style="left:1673px;top:432px;line-height:20px;color:#0052d9">云端录像</div><div class="abs" style="left:1736px;top:433px"><svg width="16" height="16" viewBox="0 0 16 16" fill="none" ><path d="M2 4.4H15.6M6.1 4.4V2.5H11.9V4.4M4.6 4.4V15.2H13.4V4.4" stroke="#d54941" stroke-width="1.2"/><path d="M9 6.3V13.6" stroke="#e08a84" stroke-width="1.2"/></svg></div><div class="abs" style="left:1752px;top:432px;line-height:20px;color:#d54941">移除</div><div class="abs" style="left:1790px;top:432px;line-height:20px;color:#d9531e"><span style="color:#9a4a2a">···</span>更多</div>
<div class="abs" style="left:299px;top:486px;width:16px;height:16px;border-radius:3px;border:1px solid #dcdcdc;background:#fff"></div>
<div class="abs" style="left:333px;top:469px;width:199px;height:49px;display:flex;align-items:center;justify-content:center;white-space:nowrap;font-size:15px">133</div>
<div class="abs" style="left:536px;top:469px;width:62px;height:49px;overflow:hidden"><div class="abs" style="left:-536px;top:-469px;width:1920px;height:911px"><div class="abs" style="left:509px;top:469px;width:90px;height:49px;display:flex;align-items:center;justify-content:center;white-space:nowrap;"><div style="width:42px;height:24px;border-radius:3px;font-size:12px;line-height:22px;text-align:center;color:#c8433b;border:1px solid #cc5049;background:#ffeeeb">离线</div></div></div></div>
<div class="abs" style="left:599px;top:469px;width:109px;height:49px;display:flex;align-items:center;justify-content:center;white-space:nowrap;font-size:15px">0</div>
<div class="abs" style="left:709px;top:469px;width:109px;height:49px;display:flex;align-items:center;justify-content:center;white-space:nowrap;font-size:15px">rtp_push</div>
<div class="abs" style="left:819px;top:469px;width:89px;height:49px;display:flex;align-items:center;justify-content:center;white-space:nowrap;font-size:15px">0</div>
<div class="abs" style="left:909px;top:469px;width:179px;height:49px;display:flex;align-items:center;justify-content:center;white-space:nowrap;font-size:15px">2024-07-23 17:17:59</div>
<div class="abs" style="left:1089px;top:469px;width:115px;height:49px;display:flex;align-items:center;justify-content:center;white-space:nowrap;font-size:15px">0.000</div>
<div class="abs" style="left:1205px;top:469px;width:89px;height:49px;display:flex;align-items:center;justify-content:center;white-space:nowrap;font-size:15px">rtsp</div>
<div class="abs" style="left:1295px;top:469px;width:99px;height:49px;display:flex;align-items:center;justify-content:center;white-space:nowrap;"><div style="width:42px;height:24px;border-radius:3px;font-size:12px;line-height:22px;text-align:center;color:#2a9466;border:1px solid #3a9a6e;background:#ddf8ea">开启</div></div>
<div class="abs" style="left:1395px;top:469px;width:89px;height:49px;display:flex;align-items:center;justify-content:center;white-space:nowrap;"><div style="width:42px;height:24px;border-radius:3px;font-size:12px;line-height:22px;text-align:center;color:#2a9466;border:1px solid #3a9a6e;background:#ddf8ea">开启</div></div>
<div class="abs" style="left:1485px;top:469px;width:89px;height:49px;display:flex;align-items:center;justify-content:center;white-space:nowrap;"><div style="width:30px;height:24px;border-radius:3px;font-size:12px;line-height:22px;text-align:center;color:#0052d9;background:#f2f3ff">是</div></div>
<div class="abs" style="left:1605px;top:483px"><svg width="16" height="16" viewBox="0 0 16 16" fill="none" ><circle cx="7.9" cy="8.9" r="6.55" stroke="#2b9a6a" stroke-width="1.3"/><path d="M5.8 5.6V12.1L11.5 8.85Z" fill="#2ba471"/></svg></div><div class="abs" style="left:1620px;top:482px;line-height:20px;color:#2ba471">播放</div><div class="abs" style="left:1656px;top:483px"><svg width="16" height="16" viewBox="0 0 16 16" fill="none" ><rect x="2.65" y="8.75" width="9.4" height="6.2" stroke="#0052d9" stroke-width="1.3"/><path d="M12.7 10.2L15.1 9.3V14.8L12.7 13.8" stroke="#0052d9" stroke-width="1.2"/><circle cx="4.3" cy="5.9" r="1.9" stroke="#0052d9" stroke-width="1.2"/><circle cx="9.6" cy="5" r="2.6" stroke="#0052d9" stroke-width="1.2"/></svg></div><div class="abs" style="left:1673px;top:482px;line-height:20px;color:#0052d9">云端录像</div><div class="abs" style="left:1736px;top:483px"><svg width="16" height="16" viewBox="0 0 16 16" fill="none" ><path d="M2 4.4H15.6M6.1 4.4V2.5H11.9V4.4M4.6 4.4V15.2H13.4V4.4" stroke="#d54941" stroke-width="1.2"/><path d="M9 6.3V13.6" stroke="#e08a84" stroke-width="1.2"/></svg></div><div class="abs" style="left:1752px;top:482px;line-height:20px;color:#d54941">移除</div><div class="abs" style="left:1790px;top:482px;line-height:20px;color:#d9531e"><span style="color:#9a4a2a">···</span>更多</div>
<div class="abs" style="left:299px;top:536px;width:16px;height:16px;border-radius:3px;border:1px solid #dcdcdc;background:#fff"></div>
<div class="abs" style="left:333px;top:519px;width:199px;height:49px;display:flex;align-items:center;justify-content:center;white-space:nowrap;font-size:15px">134</div>
<div class="abs" style="left:536px;top:519px;width:62px;height:49px;overflow:hidden"><div class="abs" style="left:-536px;top:-519px;width:1920px;height:911px"><div class="abs" style="left:509px;top:519px;width:90px;height:49px;display:flex;align-items:center;justify-content:center;white-space:nowrap;"><div style="width:42px;height:24px;border-radius:3px;font-size:12px;line-height:22px;text-align:center;color:#c8433b;border:1px solid #cc5049;background:#ffeeeb">离线</div></div></div></div>
<div class="abs" style="left:599px;top:519px;width:109px;height:49px;display:flex;align-items:center;justify-content:center;white-space:nowrap;font-size:15px">0</div>
<div class="abs" style="left:709px;top:519px;width:109px;height:49px;display:flex;align-items:center;justify-content:center;white-space:nowrap;font-size:15px">rtp_push</div>
<div class="abs" style="left:819px;top:519px;width:89px;height:49px;display:flex;align-items:center;justify-content:center;white-space:nowrap;font-size:15px">0</div>
<div class="abs" style="left:909px;top:519px;width:179px;height:49px;display:flex;align-items:center;justify-content:center;white-space:nowrap;font-size:15px">2024-07-23 17:24:13</div>
<div class="abs" style="left:1089px;top:519px;width:115px;height:49px;display:flex;align-items:center;justify-content:center;white-space:nowrap;font-size:15px">0.000</div>
<div class="abs" style="left:1205px;top:519px;width:89px;height:49px;display:flex;align-items:center;justify-content:center;white-space:nowrap;font-size:15px">rtsp</div>
<div class="abs" style="left:1295px;top:519px;width:99px;height:49px;display:flex;align-items:center;justify-content:center;white-space:nowrap;"><div style="width:42px;height:24px;border-radius:3px;font-size:12px;line-height:22px;text-align:center;color:#2a9466;border:1px solid #3a9a6e;background:#ddf8ea">开启</div></div>
<div class="abs" style="left:1395px;top:519px;width:89px;height:49px;display:flex;align-items:center;justify-content:center;white-space:nowrap;"><div style="width:42px;height:24px;border-radius:3px;font-size:12px;line-height:22px;text-align:center;color:#2a9466;border:1px solid #3a9a6e;background:#ddf8ea">开启</div></div>
<div class="abs" style="left:1485px;top:519px;width:89px;height:49px;display:flex;align-items:center;justify-content:center;white-space:nowrap;"><div style="width:30px;height:24px;border-radius:3px;font-size:12px;line-height:22px;text-align:center;color:#0052d9;background:#f2f3ff">是</div></div>
<div class="abs" style="left:1605px;top:533px"><svg width="16" height="16" viewBox="0 0 16 16" fill="none" ><circle cx="7.9" cy="8.9" r="6.55" stroke="#2b9a6a" stroke-width="1.3"/><path d="M5.8 5.6V12.1L11.5 8.85Z" fill="#2ba471"/></svg></div><div class="abs" style="left:1620px;top:532px;line-height:20px;color:#2ba471">播放</div><div class="abs" style="left:1656px;top:533px"><svg width="16" height="16" viewBox="0 0 16 16" fill="none" ><rect x="2.65" y="8.75" width="9.4" height="6.2" stroke="#0052d9" stroke-width="1.3"/><path d="M12.7 10.2L15.1 9.3V14.8L12.7 13.8" stroke="#0052d9" stroke-width="1.2"/><circle cx="4.3" cy="5.9" r="1.9" stroke="#0052d9" stroke-width="1.2"/><circle cx="9.6" cy="5" r="2.6" stroke="#0052d9" stroke-width="1.2"/></svg></div><div class="abs" style="left:1673px;top:532px;line-height:20px;color:#0052d9">云端录像</div><div class="abs" style="left:1736px;top:533px"><svg width="16" height="16" viewBox="0 0 16 16" fill="none" ><path d="M2 4.4H15.6M6.1 4.4V2.5H11.9V4.4M4.6 4.4V15.2H13.4V4.4" stroke="#d54941" stroke-width="1.2"/><path d="M9 6.3V13.6" stroke="#e08a84" stroke-width="1.2"/></svg></div><div class="abs" style="left:1752px;top:532px;line-height:20px;color:#d54941">移除</div><div class="abs" style="left:1790px;top:532px;line-height:20px;color:#d9531e"><span style="color:#9a4a2a">···</span>更多</div>
<div class="abs" style="left:299px;top:586px;width:16px;height:16px;border-radius:3px;border:1px solid #dcdcdc;background:#fff"></div>
<div class="abs" style="left:333px;top:569px;width:199px;height:49px;display:flex;align-items:center;justify-content:center;white-space:nowrap;font-size:15px">135</div>
<div class="abs" style="left:536px;top:569px;width:62px;height:49px;overflow:hidden"><div class="abs" style="left:-536px;top:-569px;width:1920px;height:911px"><div class="abs" style="left:509px;top:569px;width:90px;height:49px;display:flex;align-items:center;justify-content:center;white-space:nowrap;"><div style="width:42px;height:24px;border-radius:3px;font-size:12px;line-height:22px;text-align:center;color:#c8433b;border:1px solid #cc5049;background:#ffeeeb">离线</div></div></div></div>
<div class="abs" style="left:599px;top:569px;width:109px;height:49px;display:flex;align-items:center;justify-content:center;white-space:nowrap;font-size:15px">0</div>
<div class="abs" style="left:709px;top:569px;width:109px;height:49px;display:flex;align-items:center;justify-content:center;white-space:nowrap;font-size:15px">rtmp_push</div>
<div class="abs" style="left:819px;top:569px;width:89px;height:49px;display:flex;align-items:center;justify-content:center;white-space:nowrap;font-size:15px">0</div>
<div class="abs" style="left:909px;top:569px;width:179px;height:49px;display:flex;align-items:center;justify-content:center;white-space:nowrap;font-size:15px">2024-07-24 06:45:18</div>
<div class="abs" style="left:1089px;top:569px;width:115px;height:49px;display:flex;align-items:center;justify-content:center;white-space:nowrap;font-size:15px">0.000</div>
<div class="abs" style="left:1205px;top:569px;width:89px;height:49px;display:flex;align-items:center;justify-content:center;white-space:nowrap;font-size:15px">rtsp</div>
<div class="abs" style="left:1295px;top:569px;width:99px;height:49px;display:flex;align-items:center;justify-content:center;white-space:nowrap;"><div style="width:42px;height:24px;border-radius:3px;font-size:12px;line-height:22px;text-align:center;color:#2a9466;border:1px solid #3a9a6e;background:#ddf8ea">开启</div></div>
<div class="abs" style="left:1395px;top:569px;width:89px;height:49px;display:flex;align-items:center;justify-content:center;white-space:nowrap;"><div style="width:42px;height:24px;border-radius:3px;font-size:12px;line-height:22px;text-align:center;color:#2a9466;border:1px solid #3a9a6e;background:#ddf8ea">开启</div></div>
<div class="abs" style="left:1485px;top:569px;width:89px;height:49px;display:flex;align-items:center;justify-content:center;white-space:nowrap;"><div style="width:30px;height:24px;border-radius:3px;font-size:12px;line-height:22px;text-align:center;color:#0052d9;background:#f2f3ff">是</div></div>
<div class="abs" style="left:1605px;top:583px"><svg width="16" height="16" viewBox="0 0 16 16" fill="none" ><circle cx="7.9" cy="8.9" r="6.55" stroke="#2b9a6a" stroke-width="1.3"/><path d="M5.8 5.6V12.1L11.5 8.85Z" fill="#2ba471"/></svg></div><div class="abs" style="left:1620px;top:582px;line-height:20px;color:#2ba471">播放</div><div class="abs" style="left:1656px;top:583px"><svg width="16" height="16" viewBox="0 0 16 16" fill="none" ><rect x="2.65" y="8.75" width="9.4" height="6.2" stroke="#0052d9" stroke-width="1.3"/><path d="M12.7 10.2L15.1 9.3V14.8L12.7 13.8" stroke="#0052d9" stroke-width="1.2"/><circle cx="4.3" cy="5.9" r="1.9" stroke="#0052d9" stroke-width="1.2"/><circle cx="9.6" cy="5" r="2.6" stroke="#0052d9" stroke-width="1.2"/></svg></div><div class="abs" style="left:1673px;top:582px;line-height:20px;color:#0052d9">云端录像</div><div class="abs" style="left:1736px;top:583px"><svg width="16" height="16" viewBox="0 0 16 16" fill="none" ><path d="M2 4.4H15.6M6.1 4.4V2.5H11.9V4.4M4.6 4.4V15.2H13.4V4.4" stroke="#d54941" stroke-width="1.2"/><path d="M9 6.3V13.6" stroke="#e08a84" stroke-width="1.2"/></svg></div><div class="abs" style="left:1752px;top:582px;line-height:20px;color:#d54941">移除</div><div class="abs" style="left:1790px;top:582px;line-height:20px;color:#d9531e"><span style="color:#9a4a2a">···</span>更多</div>
<div class="abs" style="left:299px;top:636px;width:16px;height:16px;border-radius:3px;border:1px solid #dcdcdc;background:#fff"></div>
<div class="abs" style="left:333px;top:619px;width:199px;height:49px;display:flex;align-items:center;justify-content:center;white-space:nowrap;font-size:15px">139</div>
<div class="abs" style="left:536px;top:619px;width:62px;height:49px;overflow:hidden"><div class="abs" style="left:-536px;top:-619px;width:1920px;height:911px"><div class="abs" style="left:509px;top:619px;width:90px;height:49px;display:flex;align-items:center;justify-content:center;white-space:nowrap;"><div style="width:42px;height:24px;border-radius:3px;font-size:12px;line-height:22px;text-align:center;color:#c8433b;border:1px solid #cc5049;background:#ffeeeb">离线</div></div></div></div>
<div class="abs" style="left:599px;top:619px;width:109px;height:49px;display:flex;align-items:center;justify-content:center;white-space:nowrap;font-size:15px">0</div>
<div class="abs" style="left:709px;top:619px;width:109px;height:49px;display:flex;align-items:center;justify-content:center;white-space:nowrap;font-size:15px">rtmp_push</div>
<div class="abs" style="left:819px;top:619px;width:89px;height:49px;display:flex;align-items:center;justify-content:center;white-space:nowrap;font-size:15px">0</div>
<div class="abs" style="left:909px;top:619px;width:179px;height:49px;display:flex;align-items:center;justify-content:center;white-space:nowrap;font-size:15px">2024-07-29 17:05:47</div>
<div class="abs" style="left:1089px;top:619px;width:115px;height:49px;display:flex;align-items:center;justify-content:center;white-space:nowrap;font-size:15px">0.000</div>
<div class="abs" style="left:1205px;top:619px;width:89px;height:49px;display:flex;align-items:center;justify-content:center;white-space:nowrap;font-size:15px">rtsp</div>
<div class="abs" style="left:1295px;top:619px;width:99px;height:49px;display:flex;align-items:center;justify-content:center;white-space:nowrap;"><div style="width:42px;height:24px;border-radius:3px;font-size:12px;line-height:22px;text-align:center;color:#2a9466;border:1px solid #3a9a6e;background:#ddf8ea">开启</div></div>
<div class="abs" style="left:1395px;top:619px;width:89px;height:49px;display:flex;align-items:center;justify-content:center;white-space:nowrap;"><div style="width:42px;height:24px;border-radius:3px;font-size:12px;line-height:22px;text-align:center;color:#2a9466;border:1px solid #3a9a6e;background:#ddf8ea">开启</div></div>
<div class="abs" style="left:1485px;top:619px;width:89px;height:49px;display:flex;align-items:center;justify-content:center;white-space:nowrap;"><div style="width:30px;height:24px;border-radius:3px;font-size:12px;line-height:22px;text-align:center;color:#0052d9;background:#f2f3ff">是</div></div>
<div class="abs" style="left:1605px;top:633px"><svg width="16" height="16" viewBox="0 0 16 16" fill="none" ><circle cx="7.9" cy="8.9" r="6.55" stroke="#2b9a6a" stroke-width="1.3"/><path d="M5.8 5.6V12.1L11.5 8.85Z" fill="#2ba471"/></svg></div><div class="abs" style="left:1620px;top:632px;line-height:20px;color:#2ba471">播放</div><div class="abs" style="left:1656px;top:633px"><svg width="16" height="16" viewBox="0 0 16 16" fill="none" ><rect x="2.65" y="8.75" width="9.4" height="6.2" stroke="#0052d9" stroke-width="1.3"/><path d="M12.7 10.2L15.1 9.3V14.8L12.7 13.8" stroke="#0052d9" stroke-width="1.2"/><circle cx="4.3" cy="5.9" r="1.9" stroke="#0052d9" stroke-width="1.2"/><circle cx="9.6" cy="5" r="2.6" stroke="#0052d9" stroke-width="1.2"/></svg></div><div class="abs" style="left:1673px;top:632px;line-height:20px;color:#0052d9">云端录像</div><div class="abs" style="left:1736px;top:633px"><svg width="16" height="16" viewBox="0 0 16 16" fill="none" ><path d="M2 4.4H15.6M6.1 4.4V2.5H11.9V4.4M4.6 4.4V15.2H13.4V4.4" stroke="#d54941" stroke-width="1.2"/><path d="M9 6.3V13.6" stroke="#e08a84" stroke-width="1.2"/></svg></div><div class="abs" style="left:1752px;top:632px;line-height:20px;color:#d54941">移除</div><div class="abs" style="left:1790px;top:632px;line-height:20px;color:#d9531e"><span style="color:#9a4a2a">···</span>更多</div>
<div class="abs" style="left:299px;top:686px;width:16px;height:16px;border-radius:3px;border:1px solid #dcdcdc;background:#fff"></div>
<div class="abs" style="left:333px;top:669px;width:199px;height:49px;display:flex;align-items:center;justify-content:center;white-space:nowrap;font-size:15px">140</div>
<div class="abs" style="left:536px;top:669px;width:62px;height:49px;overflow:hidden"><div class="abs" style="left:-536px;top:-669px;width:1920px;height:911px"><div class="abs" style="left:509px;top:669px;width:90px;height:49px;display:flex;align-items:center;justify-content:center;white-space:nowrap;"><div style="width:42px;height:24px;border-radius:3px;font-size:12px;line-height:22px;text-align:center;color:#c8433b;border:1px solid #cc5049;background:#ffeeeb">离线</div></div></div></div>
<div class="abs" style="left:599px;top:669px;width:109px;height:49px;display:flex;align-items:center;justify-content:center;white-space:nowrap;font-size:15px">0</div>
<div class="abs" style="left:709px;top:669px;width:109px;height:49px;display:flex;align-items:center;justify-content:center;white-space:nowrap;font-size:15px">rtmp_push</div>
<div class="abs" style="left:819px;top:669px;width:89px;height:49px;display:flex;align-items:center;justify-content:center;white-space:nowrap;font-size:15px">2</div>
<div class="abs" style="left:909px;top:669px;width:179px;height:49px;display:flex;align-items:center;justify-content:center;white-space:nowrap;font-size:15px">2024-07-29 17:03:27</div>
<div class="abs" style="left:1089px;top:669px;width:115px;height:49px;display:flex;align-items:center;justify-content:center;white-space:nowrap;font-size:15px">278.000</div>
<div class="abs" style="left:1205px;top:669px;width:89px;height:49px;display:flex;align-items:center;justify-content:center;white-space:nowrap;font-size:15px">rtsp</div>
<div class="abs" style="left:1295px;top:669px;width:99px;height:49px;display:flex;align-items:center;justify-content:center;white-space:nowrap;"><div style="width:42px;height:24px;border-radius:3px;font-size:12px;line-height:22px;text-align:center;color:#2a9466;border:1px solid #3a9a6e;background:#ddf8ea">开启</div></div>
<div class="abs" style="left:1395px;top:669px;width:89px;height:49px;display:flex;align-items:center;justify-content:center;white-space:nowrap;"><div style="width:42px;height:24px;border-radius:3px;font-size:12px;line-height:22px;text-align:center;color:#2a9466;border:1px solid #3a9a6e;background:#ddf8ea">开启</div></div>
<div class="abs" style="left:1485px;top:669px;width:89px;height:49px;display:flex;align-items:center;justify-content:center;white-space:nowrap;"><div style="width:30px;height:24px;border-radius:3px;font-size:12px;line-height:22px;text-align:center;color:#0052d9;background:#f2f3ff">是</div></div>
<div class="abs" style="left:1605px;top:683px"><svg width="16" height="16" viewBox="0 0 16 16" fill="none" ><circle cx="7.9" cy="8.9" r="6.55" stroke="#2b9a6a" stroke-width="1.3"/><path d="M5.8 5.6V12.1L11.5 8.85Z" fill="#2ba471"/></svg></div><div class="abs" style="left:1620px;top:682px;line-height:20px;color:#2ba471">播放</div><div class="abs" style="left:1656px;top:683px"><svg width="16" height="16" viewBox="0 0 16 16" fill="none" ><rect x="2.65" y="8.75" width="9.4" height="6.2" stroke="#0052d9" stroke-width="1.3"/><path d="M12.7 10.2L15.1 9.3V14.8L12.7 13.8" stroke="#0052d9" stroke-width="1.2"/><circle cx="4.3" cy="5.9" r="1.9" stroke="#0052d9" stroke-width="1.2"/><circle cx="9.6" cy="5" r="2.6" stroke="#0052d9" stroke-width="1.2"/></svg></div><div class="abs" style="left:1673px;top:682px;line-height:20px;color:#0052d9">云端录像</div><div class="abs" style="left:1736px;top:683px"><svg width="16" height="16" viewBox="0 0 16 16" fill="none" ><path d="M2 4.4H15.6M6.1 4.4V2.5H11.9V4.4M4.6 4.4V15.2H13.4V4.4" stroke="#d54941" stroke-width="1.2"/><path d="M9 6.3V13.6" stroke="#e08a84" stroke-width="1.2"/></svg></div><div class="abs" style="left:1752px;top:682px;line-height:20px;color:#d54941">移除</div><div class="abs" style="left:1790px;top:682px;line-height:20px;color:#d9531e"><span style="color:#9a4a2a">···</span>更多</div>
<div class="abs" style="left:299px;top:736px;width:16px;height:16px;border-radius:3px;border:1px solid #dcdcdc;background:#fff"></div>
<div class="abs" style="left:333px;top:719px;width:199px;height:49px;display:flex;align-items:center;justify-content:center;white-space:nowrap;font-size:15px">144</div>
<div class="abs" style="left:536px;top:719px;width:62px;height:49px;overflow:hidden"><div class="abs" style="left:-536px;top:-719px;width:1920px;height:911px"><div class="abs" style="left:509px;top:719px;width:90px;height:49px;display:flex;align-items:center;justify-content:center;white-space:nowrap;"><div style="width:42px;height:24px;border-radius:3px;font-size:12px;line-height:22px;text-align:center;color:#c8433b;border:1px solid #cc5049;background:#ffeeeb">离线</div></div></div></div>
<div class="abs" style="left:599px;top:719px;width:109px;height:49px;display:flex;align-items:center;justify-content:center;white-space:nowrap;font-size:15px">0</div>
<div class="abs" style="left:709px;top:719px;width:109px;height:49px;display:flex;align-items:center;justify-content:center;white-space:nowrap;font-size:15px">rtmp_push</div>
<div class="abs" style="left:819px;top:719px;width:89px;height:49px;display:flex;align-items:center;justify-content:center;white-space:nowrap;font-size:15px">0</div>
<div class="abs" style="left:909px;top:719px;width:179px;height:49px;display:flex;align-items:center;justify-content:center;white-space:nowrap;font-size:15px">2024-07-29 11:02:25</div>
<div class="abs" style="left:1089px;top:719px;width:115px;height:49px;display:flex;align-items:center;justify-content:center;white-space:nowrap;font-size:15px">0.000</div>
<div class="abs" style="left:1205px;top:719px;width:89px;height:49px;display:flex;align-items:center;justify-content:center;white-space:nowrap;font-size:15px">rtsp</div>
<div class="abs" style="left:1295px;top:719px;width:99px;height:49px;display:flex;align-items:center;justify-content:center;white-space:nowrap;"><div style="width:42px;height:24px;border-radius:3px;font-size:12px;line-height:22px;text-align:center;color:#2a9466;border:1px solid #3a9a6e;background:#ddf8ea">开启</div></div>
<div class="abs" style="left:1395px;top:719px;width:89px;height:49px;display:flex;align-items:center;justify-content:center;white-space:nowrap;"><div style="width:42px;height:24px;border-radius:3px;font-size:12px;line-height:22px;text-align:center;color:#2a9466;border:1px solid #3a9a6e;background:#ddf8ea">开启</div></div>
<div class="abs" style="left:1485px;top:719px;width:89px;height:49px;display:flex;align-items:center;justify-content:center;white-space:nowrap;"><div style="width:30px;height:24px;border-radius:3px;font-size:12px;line-height:22px;text-align:center;color:#0052d9;background:#f2f3ff">是</div></div>
<div class="abs" style="left:1605px;top:733px"><svg width="16" height="16" viewBox="0 0 16 16" fill="none" ><circle cx="7.9" cy="8.9" r="6.55" stroke="#2b9a6a" stroke-width="1.3"/><path d="M5.8 5.6V12.1L11.5 8.85Z" fill="#2ba471"/></svg></div><div class="abs" style="left:1620px;top:732px;line-height:20px;color:#2ba471">播放</div><div class="abs" style="left:1656px;top:733px"><svg width="16" height="16" viewBox="0 0 16 16" fill="none" ><rect x="2.65" y="8.75" width="9.4" height="6.2" stroke="#0052d9" stroke-width="1.3"/><path d="M12.7 10.2L15.1 9.3V14.8L12.7 13.8" stroke="#0052d9" stroke-width="1.2"/><circle cx="4.3" cy="5.9" r="1.9" stroke="#0052d9" stroke-width="1.2"/><circle cx="9.6" cy="5" r="2.6" stroke="#0052d9" stroke-width="1.2"/></svg></div><div class="abs" style="left:1673px;top:732px;line-height:20px;color:#0052d9">云端录像</div><div class="abs" style="left:1736px;top:733px"><svg width="16" height="16" viewBox="0 0 16 16" fill="none" ><path d="M2 4.4H15.6M6.1 4.4V2.5H11.9V4.4M4.6 4.4V15.2H13.4V4.4" stroke="#d54941" stroke-width="1.2"/><path d="M9 6.3V13.6" stroke="#e08a84" stroke-width="1.2"/></svg></div><div class="abs" style="left:1752px;top:732px;line-height:20px;color:#d54941">移除</div><div class="abs" style="left:1790px;top:732px;line-height:20px;color:#d9531e"><span style="color:#9a4a2a">···</span>更多</div>
<div class="abs" style="left:568px;top:768px;width:1052px;height:6px;border-radius:3px;background:#e0e0e0"></div>
<div class="abs" style="left:297px;top:797px;line-height:20px;color:#666">共 35 条数据</div>
<div class="abs" style="left:1339px;top:791px;width:97px;height:32px;border:1px solid #dcdcdc;border-radius:3px"></div>
<div class="abs" style="left:1348px;top:797px;line-height:20px;color:#222">10 条/页</div>
<div class="abs" style="left:1414px;top:804px"><svg width="10" height="6" viewBox="0 0 10 6" fill="none" ><path d="M1 1l4 4 4-4" stroke="#999" stroke-width="1.3"/></svg></div>
<div class="abs" style="left:1465px;top:802px"><svg width="7" height="10" viewBox="0 0 7 10" fill="none" ><path d="M6 1L2 5l4 4" stroke="#c5c5c5" stroke-width="1.3"/></svg></div>
<div class="pg" style="left:1492px;background:#0052d9;border-color:#0052d9;color:#fff">1</div>
<div class="pg" style="left:1532px">2</div>
<div class="pg" style="left:1572px">3</div>
<div class="pg" style="left:1612px">4</div>
<div class="abs" style="left:1664px;top:802px"><svg width="7" height="10" viewBox="0 0 7 10" fill="none" ><path d="M1 1l4 4-4 4" stroke="#444" stroke-width="1.3"/></svg></div>
<div class="abs" style="left:1692px;top:791px;width:151px;height:32px;border-radius:3px;background:#f3f3f3"></div>
<div class="abs" style="left:1699px;top:797px;line-height:20px;color:#666">跳至</div>
<div class="abs" style="left:1736px;top:794px;width:56px;height:27px;border:1px solid #e3e3e3;border-radius:3px;background:#fff;text-align:center;line-height:25px;color:#222">1</div>
<div class="abs" style="left:1798px;top:797px;line-height:20px;color:#666">/ 4 页</div>
</body></html>
